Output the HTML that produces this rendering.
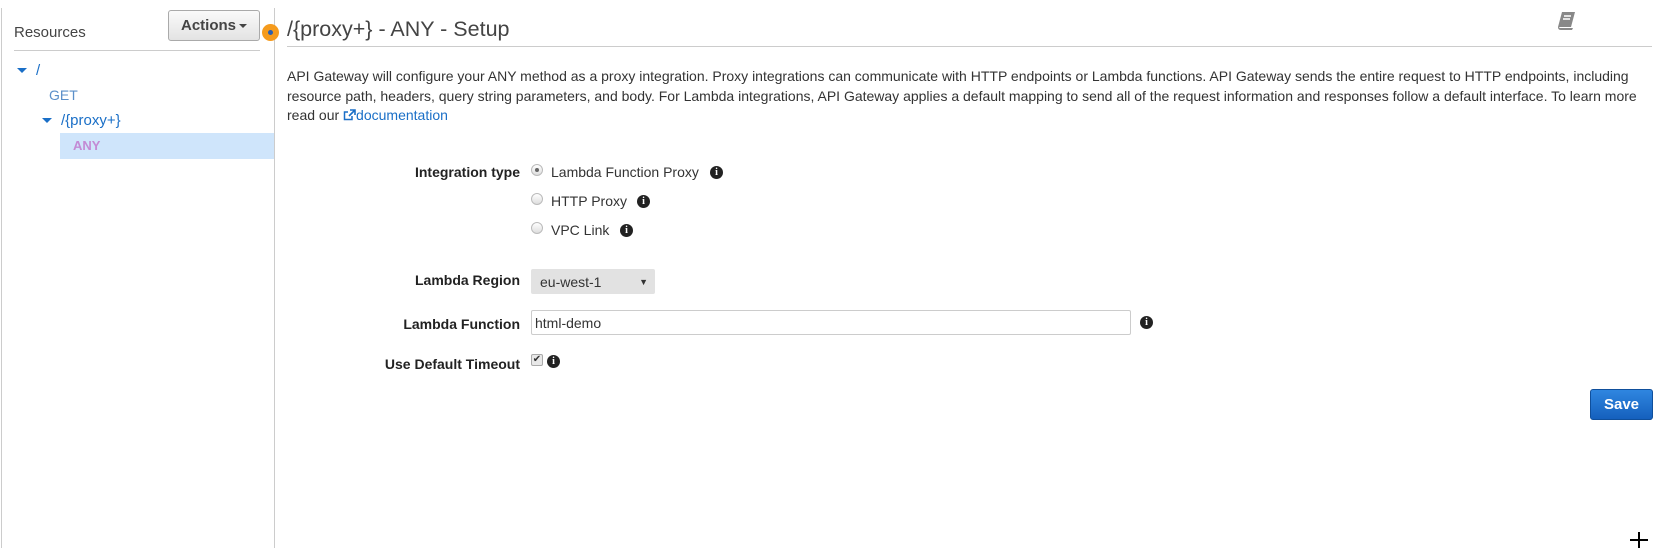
<!DOCTYPE html>
<html><head><meta charset="utf-8"><style>
*{box-sizing:border-box;margin:0;padding:0}
body{width:1665px;height:548px;overflow:hidden;background:#fff;font-family:"Liberation Sans",Arial,sans-serif;font-size:14px;color:#333;position:relative}
.a{position:absolute;white-space:nowrap}
.blue{color:#1a6fc7}
.lbl{position:absolute;right:1145px;font-weight:bold;font-size:14px;color:#222}
.info{position:absolute;width:13px;height:13px;border-radius:50%;background:#222;color:#fff;font:bold 10px "Liberation Serif",serif;text-align:center;line-height:13px}
.radio{position:absolute;width:12px;height:12px;border-radius:50%;border:1px solid #bbb;background:linear-gradient(#fff,#ddd)}
</style></head><body>
<div class="a" style="left:1px;top:8px;width:1px;height:540px;background:#ccc"></div>
<div class="a" style="left:274px;top:8px;width:1px;height:540px;background:#ccc"></div>
<div class="a" style="left:14px;top:24px;font-size:15px;color:#444">Resources</div>
<div class="a" style="left:168px;top:10px;width:92px;height:31px;border:1px solid #aaa;border-radius:3px;background:linear-gradient(#fafafa,#e3e3e3);font-weight:bold;font-size:15px;color:#444;text-align:center;line-height:29px">Actions<span style="display:inline-block;width:0;height:0;border-left:4px solid transparent;border-right:4px solid transparent;border-top:4px solid #444;margin-left:3px;vertical-align:middle"></span></div>
<div class="a" style="left:14px;top:50px;width:246px;height:1px;background:#ccc"></div>
<div class="a" style="left:17px;top:68px;border-left:5px solid transparent;border-right:5px solid transparent;border-top:5px solid #1a6fc7"></div>
<div class="a blue" style="left:36px;top:62px;font-size:15px">/</div>
<div class="a" style="left:49px;top:87px;font-size:14px;color:#5b8fc9">GET</div>
<div class="a" style="left:42px;top:118px;border-left:5px solid transparent;border-right:5px solid transparent;border-top:5px solid #1a6fc7"></div>
<div class="a blue" style="left:61px;top:112px;font-size:15px">/{proxy+}</div>
<div class="a" style="left:60px;top:133px;width:214px;height:26px;background:#cfe5fb"></div>
<div class="a" style="left:73px;top:138px;font-weight:bold;font-size:13px;color:#c38ad4">ANY</div>
<div class="a" style="left:262px;top:24px;width:17px;height:17px;border-radius:50%;background:#f59b1d"></div>
<div class="a" style="left:268px;top:30px;width:5px;height:5px;border-radius:50%;background:#2a5fb0"></div>
<div class="a" style="left:287px;top:17px;font-size:21.5px;color:#444">/{proxy+} - ANY - Setup</div>
<div class="a" style="left:287px;top:46px;width:1365px;height:1px;background:#ccc"></div>
<svg class="a" style="left:1556px;top:11px" width="22" height="20" viewBox="0 0 22 20"><path d="M6 1h13l-4 15H2z" fill="#888"/><path d="M2 16q0 3 3 3h11l1-2H5q-2 0-2-1" fill="#888"/><path d="M8 5h7M7 8h7" stroke="#fff" stroke-width="1.5"/></svg>
<div class="a" style="left:287px;top:67px;font-size:14px;line-height:19.5px;color:#333;white-space:normal;width:1365px">API Gateway will configure your ANY method as a proxy integration. Proxy integrations can communicate with HTTP endpoints or Lambda functions. API Gateway sends the entire request to HTTP endpoints, including resource path, headers, query string parameters, and body. For Lambda integrations, API Gateway applies a default mapping to send all of the request information and responses follow a default interface. To learn more read our <span class="blue"><svg width="13" height="12" viewBox="0 0 13 12" style="vertical-align:-1px"><path d="M9 7v3.5H1.5V3H5" fill="none" stroke="#1a6fc7" stroke-width="1.5"/><path d="M7 1h5v5M12 1L6 7" fill="none" stroke="#1a6fc7" stroke-width="1.6"/></svg>documentation</span></div>
<div class="lbl" style="top:164px">Integration type</div>
<div class="radio" style="left:531px;top:164px"><div style="width:4px;height:4px;border-radius:50%;background:#666;margin:3px"></div></div>
<div class="a" style="left:551px;top:164px;font-size:14px">Lambda Function Proxy</div>
<div class="info" style="left:710px;top:166px">i</div>
<div class="radio" style="left:531px;top:193px"></div>
<div class="a" style="left:551px;top:193px;font-size:14px">HTTP Proxy</div>
<div class="info" style="left:637px;top:195px">i</div>
<div class="radio" style="left:531px;top:222px"></div>
<div class="a" style="left:551px;top:222px;font-size:14px">VPC Link</div>
<div class="info" style="left:620px;top:224px">i</div>
<div class="lbl" style="top:272px">Lambda Region</div>
<div class="a" style="left:531px;top:269px;width:124px;height:25px;background:#e2e2e2;border-radius:2px;font-size:14px;line-height:26px;padding-left:9px">eu-west-1<span style="position:absolute;right:7px;font-size:9px">&#9660;</span></div>
<div class="lbl" style="top:316px">Lambda Function</div>
<div class="a" style="left:531px;top:310px;width:600px;height:25px;border:1px solid #ccc;border-radius:2px;font-size:14px;line-height:24px;padding-left:3px">html-demo</div>
<div class="info" style="left:1140px;top:316px">i</div>
<div class="lbl" style="top:356px">Use Default Timeout</div>
<div class="a" style="left:531px;top:354px;width:12px;height:12px;border:1px solid #aaa;background:#e8e8e8;border-radius:2px;font-size:10px;line-height:10px;text-align:center">&#10004;</div>
<div class="info" style="left:547px;top:355px">i</div>
<div class="a" style="left:1590px;top:389px;width:63px;height:31px;border-radius:3px;background:linear-gradient(#2f86e0,#1560bd);border:1px solid #0f4f9c;color:#fff;font-weight:bold;font-size:15px;text-align:center;line-height:29px">Save</div>
<div class="a" style="left:1630px;top:539px;width:18px;height:2px;background:#000"></div>
<div class="a" style="left:1638px;top:532px;width:2px;height:16px;background:#000"></div>
</body></html>
